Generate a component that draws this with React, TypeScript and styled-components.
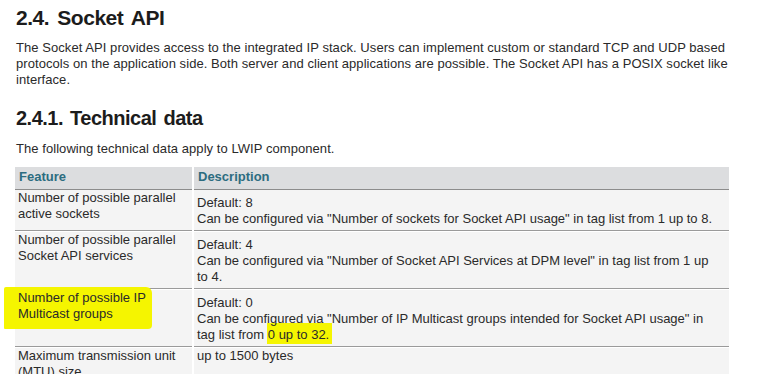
import React from "react";
import styled, { createGlobalStyle } from "styled-components";

const Global = createGlobalStyle`
  html, body { margin: 0; padding: 0; background: #fff; }
  body {
    font-family: "Liberation Sans", Arial, sans-serif;
    color: #222;
    overflow: hidden;
  }
`;

const Page = styled.div`
  width: 767px;
  height: 374px;
  overflow: hidden;
  padding: 0 0 0 16px;
  box-sizing: border-box;
`;

const H1 = styled.h1`
  margin: 5px 0 0;
  font-size: 21px;
  line-height: 26px;
  font-weight: 700;
  color: #1c1c1c;
  letter-spacing: -0.5px;
  word-spacing: 3px;
`;

const H2 = styled.h2`
  margin: 18px 0 0;
  font-size: 20px;
  line-height: 24px;
  font-weight: 700;
  color: #1c1c1c;
  letter-spacing: -0.5px;
  word-spacing: 2px;
`;

const P = styled.p<{ $top: number }>`
  margin: ${(p) => p.$top}px 0 0;
  font-size: 13px;
  line-height: 16px;
  color: #2a2a2a;
  letter-spacing: 0.06px;
`;

const Table = styled.div`
  margin: 10px 0 0 -1px;
  width: 714px;
  display: grid;
  grid-template-columns: 177px 535px;
  column-gap: 2px;
  font-size: 13px;
  line-height: 16px;
  color: #2a2a2a;
`;

const HeadCell = styled.div`
  background: #dcdddf;
  height: 21px;
  border-bottom: 1px solid #8c8c8c;
  padding: 1px 4px 0;
  box-sizing: content-box;
  color: #2c6c80;
  font-weight: 700;
  line-height: 18px;
`;

const Cell = styled.div<{ $last?: boolean }>`
  position: relative;
  isolation: isolate;
  background: #f4f4f4;
  padding: 0 3px 3px 3px;
  border-bottom: ${(p) => (p.$last ? "none" : "1px solid #9a9a9a")};
  margin-bottom: ${(p) => (p.$last ? "0" : "1px")};
`;

const DescBlock = styled.div`
  padding-top: 5px;
`;

const Marker = styled.span`
  position: absolute;
  z-index: -1;
  left: -11px;
  top: -3px;
  width: 148px;
  height: 42px;
  background: #f5f500;
  border-radius: 2px 6px 4px 1px;
`;

const Hl = styled.span`
  position: relative;
  &::before {
    content: "";
    position: absolute;
    z-index: -1;
    left: -1px;
    right: -3px;
    top: -4px;
    bottom: -2px;
    background: #f5f500;
  }
`;

export default function App() {
  return (
    <Page>
      <Global />
      <H1>2.4. Socket API</H1>
      <P $top={9}>
        The Socket API provides access to the integrated IP stack. Users can implement custom or standard TCP and UDP based
        <br />
        protocols on the application side. Both server and client applications are possible. The Socket API has a POSIX socket like
        <br />
        interface.
      </P>
      <H2>2.4.1. Technical data</H2>
      <P $top={11}>The following technical data apply to LWIP component.</P>
      <Table>
        <HeadCell>Feature</HeadCell>
        <HeadCell>Description</HeadCell>

        <Cell>
          Number of possible parallel
          <br />
          active sockets
        </Cell>
        <Cell>
          <DescBlock>
            Default: 8
            <br />
            Can be configured via "Number of sockets for Socket API usage" in tag list from 1 up to 8.
          </DescBlock>
        </Cell>

        <Cell>
          Number of possible parallel
          <br />
          Socket API services
        </Cell>
        <Cell>
          <DescBlock>
            Default: 4
            <br />
            Can be configured via "Number of Socket API Services at DPM level" in tag list from 1 up
            <br />
            to 4.
          </DescBlock>
        </Cell>

        <Cell>
          <Marker />
          Number of possible IP
          <br />
          Multicast groups
        </Cell>
        <Cell>
          <DescBlock>
            Default: 0
            <br />
            Can be configured via "Number of IP Multicast groups intended for Socket API usage" in
            <br />
            tag list from <Hl>0 up to 32.</Hl>
          </DescBlock>
        </Cell>

        <Cell $last>
          Maximum transmission unit
          <br />
          (MTU) size
        </Cell>
        <Cell $last>up to 1500 bytes</Cell>
      </Table>
    </Page>
  );
}
